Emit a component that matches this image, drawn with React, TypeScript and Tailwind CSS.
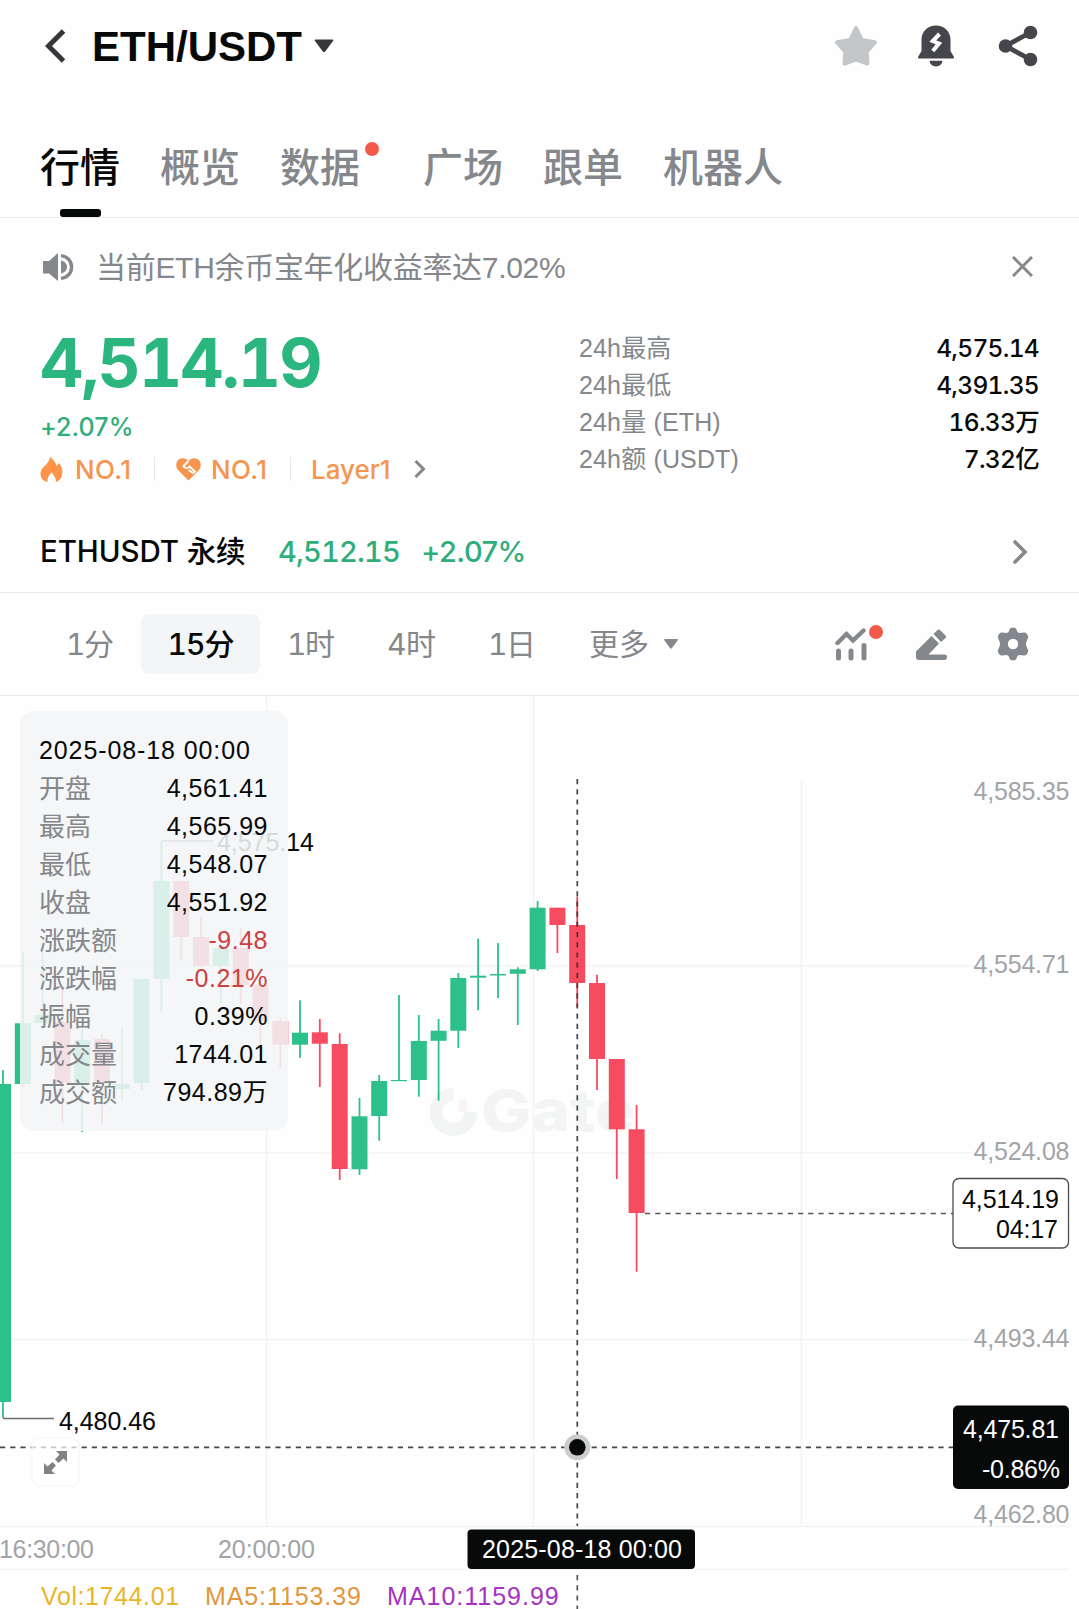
const candles = [
  { x: 3, top: 1084, bottom: 1402, high: 1070, low: 1418, up: true },
  { x: 22.8, top: 1023.3, bottom: 1084, high: 952, low: 1087, up: true },
  { x: 42.6, top: 1015, bottom: 1023, high: 952, low: 1023, up: true },
  { x: 62.4, top: 1022, bottom: 1083, high: 988, low: 1123, up: false },
  { x: 82.2, top: 1040, bottom: 1083, high: 1022, low: 1132, up: true },
  { x: 102, top: 1039, bottom: 1083, high: 1034, low: 1123, up: false },
  { x: 121.8, top: 1084, bottom: 1089, high: 1028, low: 1100, up: true },
  { x: 141.6, top: 979, bottom: 1083, high: 979, low: 1090, up: true },
  { x: 161.4, top: 881, bottom: 978.7, high: 841, low: 1012, up: true },
  { x: 181.2, top: 881, bottom: 937, high: 881, low: 960, up: false },
  { x: 201, top: 937, bottom: 966, high: 917, low: 967, up: false },
  { x: 220.8, top: 948, bottom: 966, high: 930, low: 1003, up: true },
  { x: 240.7, top: 948, bottom: 985, high: 928, low: 1003, up: false },
  { x: 260.5, top: 985, bottom: 1021, high: 985, low: 1047, up: false },
  { x: 280.3, top: 1021, bottom: 1044.7, high: 1018, low: 1068, up: false },
  { x: 300, top: 1032.7, bottom: 1044.7, high: 1000.3, low: 1058, up: true },
  { x: 319.8, top: 1032.3, bottom: 1043.7, high: 1019, low: 1087, up: false },
  { x: 339.7, top: 1044, bottom: 1169, high: 1033.3, low: 1180, up: false },
  { x: 359.5, top: 1116.3, bottom: 1169.3, high: 1098, low: 1175, up: true },
  { x: 379.2, top: 1081, bottom: 1116, high: 1075, low: 1140.7, up: true },
  { x: 399, top: 1080, bottom: 1081.2, high: 995, low: 1081, up: true },
  { x: 418.8, top: 1041, bottom: 1080, high: 1015, low: 1096.7, up: true },
  { x: 438.6, top: 1030.7, bottom: 1040.8, high: 1019, low: 1100.7, up: true },
  { x: 458.3, top: 978, bottom: 1030.7, high: 973, low: 1048, up: true },
  { x: 478.1, top: 975.7, bottom: 977.7, high: 938.7, low: 1010.3, up: true },
  { x: 498, top: 974, bottom: 975.5, high: 943, low: 998, up: true },
  { x: 517.8, top: 969.3, bottom: 973.8, high: 967.3, low: 1025, up: true },
  { x: 537.6, top: 907.7, bottom: 969.3, high: 901, low: 971, up: true },
  { x: 557.4, top: 907.7, bottom: 925, high: 907.7, low: 953, up: false },
  { x: 577.2, top: 925, bottom: 983, high: 897, low: 1007, up: false },
  { x: 597, top: 983, bottom: 1059, high: 974.7, low: 1090, up: false },
  { x: 616.8, top: 1059, bottom: 1129.3, high: 1059, low: 1179, up: false },
  { x: 636.6, top: 1129.3, bottom: 1213, high: 1105, low: 1271.7, up: false },
];

const priceLabels = [
  { y: 792, label: "4,585.35" },
  { y: 965, label: "4,554.71" },
  { y: 1152, label: "4,524.08" },
  { y: 1339, label: "4,493.44" },
  { y: 1515, label: "4,462.80" },
];

const stats = [
  { label: "24h最高", value: "4,575.14" },
  { label: "24h最低", value: "4,391.35" },
  { label: "24h量 (ETH)", value: "16.33万" },
  { label: "24h额 (USDT)", value: "7.32亿" },
];

const details = [
  { label: "开盘", value: "4,561.41" },
  { label: "最高", value: "4,565.99" },
  { label: "最低", value: "4,548.07" },
  { label: "收盘", value: "4,551.92" },
  { label: "涨跌额", value: "-9.48", down: true },
  { label: "涨跌幅", value: "-0.21%", down: true },
  { label: "振幅", value: "0.39%" },
  { label: "成交量", value: "1744.01" },
  { label: "成交额", value: "794.89万" },
];

const tabs = ["行情", "概览", "数据", "广场", "跟单", "机器人"];

// regular weight text uses the wider grotesque, medium weight stays on Inter
const sans = "font-['Liberation_Sans','Noto_Sans_CJK_SC',sans-serif]";

function Header() {
  return (
    <header className="flex h-[92px] items-center pl-[45px] pr-[41px]">
      <svg width="21" height="34" viewBox="0 0 21 34" fill="none" stroke="#36373b" strokeWidth="5">
        <path d="M18.5 2 L3.5 17 L18.5 32" />
      </svg>
      <h1 className={`ml-[26px] mt-[2px] text-[42px] font-bold leading-none text-[#070808] ${sans}`}>ETH/USDT</h1>
      <svg className="ml-[12px]" width="20" height="14" viewBox="0 0 20 14" fill="#36373b">
        <path d="M1.5 0.5H18.5Q20 0.5 19 2L11.2 12.5Q10 14 8.8 12.5L1 2Q0 0.5 1.5 0.5Z" />
      </svg>
      <div className="ml-auto flex items-center">
        <svg width="44" height="42" viewBox="0 0 44 42" fill="#c4c7c9" stroke="#c4c7c9" strokeWidth="4" strokeLinejoin="round">
          <path d="M22 3L27.800 15L41 17.300L32.800 26.500L33.400 38.700L22 34.500L10.600 38.700L11.200 26.500L3 17.300L16.200 15Z" />
        </svg>
        <svg className="ml-[39px]" width="38" height="42" viewBox="0 0 38 42">
          <path
            d="M19 0.5C27 0.5 33.5 6.5 33.5 14.5V26L37 32Q37.4 33.4 36 33.4H2Q0.6 33.4 1 32L4.5 26V14.5C4.5 6.5 11 0.5 19 0.5Z"
            fill="#44464c"
          />
          <path d="M12.5 35.8H25.5C25 39.4 22.4 41.5 19 41.5C15.6 41.5 13 39.4 12.5 35.8Z" fill="#44464c" />
          <path d="M22.5 9L15.8 16L22 18.600L15.8 26" fill="none" stroke="#fff" strokeWidth="4" />
        </svg>
        <svg className="ml-[43px]" width="40" height="42" viewBox="0 0 40 42" fill="#44464c">
          <path d="M32.5 7.5L7.5 21L32.5 34.5" fill="none" stroke="#44464c" strokeWidth="4.8" />
          <circle cx="32.5" cy="7.5" r="6.8" />
          <circle cx="7.5" cy="21" r="6.8" />
          <circle cx="32.5" cy="34.5" r="6.8" />
        </svg>
      </div>
    </header>
  );
}

function Tabs() {
  return (
    <nav className="flex h-[126px] items-end gap-10 border-b border-[#ebecee] pl-[40px]">
      {tabs.map((tab) => (
        <div
          key={tab}
          className={`relative flex h-[76px] flex-col items-center text-[40px] font-medium leading-[54px] ${
            tab === "行情" ? "text-[#070808]" : "text-[#84878b]"
          } ${tab === "数据" ? "mr-[23px]" : ""}`}
        >
          {tab}
          {tab === "行情" && <span className="mt-auto h-2 w-[41px] rounded-[3px] bg-[#070808]" />}
          {tab === "数据" && <span className="absolute -right-[19px] top-[1px] h-[14px] w-[14px] rounded-full bg-[#f2594b]" />}
        </div>
      ))}
    </nav>
  );
}

function Notice() {
  return (
    <div className={`flex h-[98px] items-center pl-[43px] pr-[46px] text-[#84878b] ${sans}`}>
      <svg width="31" height="28" viewBox="0 0 31 28" fill="#84878b">
        <path d="M0 8H6L15 0V28L6 20.500H0Z" />
        <path d="M18 7.500C22 8.500 24 11 24 14C24 17 22 19.500 18 20.500Z" />
        <path d="M18 2.600C24.500 3.200 28.600 8 28.600 14C28.600 20 24.500 24.800 18 25.400" fill="none" stroke="#84878b" strokeWidth="3.400" />
      </svg>
      <p className="ml-[22px] mt-[2px] text-[30px] leading-none tracking-[-0.300px]">当前ETH余币宝年化收益率达7.02%</p>
      <svg className="mb-[2px] ml-auto" width="21" height="21" viewBox="0 0 21 21" stroke="#84878b" strokeWidth="3">
        <path d="M1 1L20 20M20 1L1 20" />
      </svg>
    </div>
  );
}

function Summary() {
  return (
    <section className="flex h-[195px] justify-between pl-[40px] pr-[40px] pt-[14px]">
      <div>
        <div className="text-[67px] font-bold leading-[66px] tracking-[-1.900px] text-[#2bb67f] tabular-nums">4,514.19</div>
        <div className="mt-[14px] text-[25px] font-medium leading-[34px] tracking-[0.1px] text-[#2fae7c]">+2.07%</div>
        <div className="mt-[8px] flex h-[34px] items-center text-[26px] font-medium text-[#f5954e]">
          <svg width="23" height="25" viewBox="0 0 23 25" fill="#ff9348">
            <path d="M10 0C14 3 16 6 16.500 9L19 6C22 10 23 14 22 18C21 22 19 24 16 25C16 21 14 18 11.500 15.500C9 18 7 21 7.500 25C3 24 0.500 21 0.500 16.500C0.500 10 9 8 10 0Z" />
          </svg>
          <span className="ml-[12px] w-[57px] tracking-[0.4px]">NO.1</span>
          <span className="ml-[22px] h-[24px] w-px bg-[#e6e8ea]" />
          <svg className="ml-[21px]" width="25" height="23" viewBox="0 0 25 23">
            <path d="M12.500 22.500L2 12C-1 8 0 3 3.500 1C7 -0.600 10.500 0.500 12.500 3C14.500 0.500 18 -0.600 21.500 1C25 3 26 8 23 12Z" fill="#f5954e" />
            <path d="M12.500 3L7.500 8C8.500 11 12 10.500 13.500 8.500L19 13.500Q17.500 15.500 15.500 14L12.500 12" fill="none" stroke="#fff" strokeWidth="1.900" />
          </svg>
          <span className="ml-[10px] w-[57px] tracking-[0.4px]">NO.1</span>
          <span className="ml-[22px] h-[24px] w-px bg-[#e6e8ea]" />
          <span className="ml-[20px] w-[82px]">Layer1</span>
          <svg className="ml-[21px]" width="12" height="18" viewBox="0 0 12 18" fill="none" stroke="#84878b" strokeWidth="3">
            <path d="M1.500 1L9.500 9L1.500 17" />
          </svg>
        </div>
      </div>
      <div className="w-[460px]">
        {stats.map((s) => (
          <div key={s.label} className="flex h-[37px] items-center justify-between text-[25px]">
            <span className={`tracking-[0.150px] text-[#84878b] ${sans}`}>{s.label}</span>
            <span className="text-[24.500px] font-medium tracking-[-0.700px] text-[#070808] tabular-nums">{s.value}</span>
          </div>
        ))}
      </div>
    </section>
  );
}

function Perpetual() {
  return (
    <div className="flex h-[82px] items-center border-b border-[#ebecee] pl-[40px] pr-[51px] text-[29px] font-medium">
      <span className="w-[206px] text-[29.500px] tracking-[-0.100px] text-[#070808]">ETHUSDT 永续</span>
      <span className="ml-[32px] w-[122px] tracking-[-0.800px] text-[#2fae7c] tabular-nums">4,512.15</span>
      <span className="ml-[21px] tracking-[-0.500px] text-[#2fae7c]">+2.07%</span>
      <svg className="ml-auto" width="15" height="24" viewBox="0 0 15 24" fill="none" stroke="#84878b" strokeWidth="3.600" strokeLinecap="round">
        <path d="M2 2L12 12L2 22" />
      </svg>
    </div>
  );
}

function Intervals() {
  return (
    <div className="flex h-[103px] items-center border-b border-[#ebecee] pl-[41px] pr-[50px] text-[30px] text-[#84878b] tabular-nums">
      <span className="w-[100px] pl-[25px] tracking-[-1.500px]">1分</span>
      <span className="flex h-[60px] w-[119px] items-center justify-center rounded-lg bg-[#f3f5f7] font-medium tracking-[-1px] text-[#070808]">15分</span>
      <span className="w-[100px] pl-[27px] tracking-[-1.500px]">1时</span>
      <span className="w-[101px] pl-[27px] tracking-[-0.500px]">4时</span>
      <span className="w-[100px] pl-[27px] tracking-[-1.500px]">1日</span>
      <span className="pl-[28px]">更多</span>
      <svg className="ml-[15px]" width="14" height="10" viewBox="0 0 14 10" fill="#84878b">
        <path d="M1 0H13Q14.500 0 13.500 1.500L8 9Q7 10.400 6 9L0.500 1.500Q-0.500 0 1 0Z" />
      </svg>
      <div className="ml-auto flex items-center">
        <div className="relative">
          <svg width="32" height="33" viewBox="0 0 32 33" fill="none" stroke="#84878b" strokeLinecap="round" strokeLinejoin="round">
            <path d="M2.500 15L11.500 6L18 12.500L28.500 2.500" strokeWidth="4.400" strokeLinejoin="miter" />
            <path d="M3.500 23V30M16 23V30M29 17.500V30" strokeWidth="5" />
          </svg>
          <span className="absolute -right-[16px] -top-[3px] h-[14px] w-[14px] rounded-full bg-[#f2594b]" />
        </div>
        <svg className="ml-[49px]" width="31" height="31" viewBox="0 0 31 31" fill="#84878b">
          <path d="M15.500 7L23 14.500L12.500 25.500H29Q31 25.500 31 28T29 31H3Q0 31 0 28V22.500Z" />
          <path d="M17.500 5L21.500 1Q22.700 -0.200 24 1L29.500 6.500Q30.700 8 29.500 9L25 13Z" />
        </svg>
        <svg className="ml-[50px]" width="32" height="34" viewBox="0 0 32 34">
          <path
            d="M13 1.500Q16 -0.500 19 1.500L20.500 5Q22 6.300 24 5.800L28 5.500Q31 7 31.200 10.500L29.500 14.500Q28.500 17 29.500 19.500L31.200 23.500Q31 27 28 28.500L24 28.200Q22 27.700 20.500 29L19 32.500Q16 34.500 13 32.500L11.500 29Q10 27.700 8 28.200L4 28.500Q1 27 0.800 23.500L2.500 19.500Q3.500 17 2.500 14.500L0.800 10.500Q1 7 4 5.500L8 5.800Q10 6.300 11.500 5Z"
            fill="#84878b"
          />
          <circle cx="16" cy="17" r="5.200" fill="#fff" />
        </svg>
      </div>
    </div>
  );
}

function Chart() {
  return (
    <div className={`relative h-[874px] ${sans}`}>
      <svg className="block" width="1079" height="874" viewBox="0 696 1079 874" fontSize="25">
        {/* grid */}
        <g stroke="#f3f4f5" strokeWidth="1.500">
          <path d="M266.500 696V1526M533.500 696V1526M801.500 780V1526" />
          <path d="M0 966H974M0 1153H974M0 1339.500H974M0 1526.500H1069M0 1569.500H1069" />
        </g>

        {/* watermark */}
        <path d="M453.500 1094.500A17.500 17.500 0 1 0 471 1112" fill="none" stroke="#f3f5f5" strokeWidth="13" />
        <path d="M459 1100H467V1112H459Z" fill="#faf3f4" />
        <text
          className="font-['Inter',sans-serif]"
          x="481"
          y="1131"
          fontSize="57"
          fontWeight="800"
          fill="#f3f5f5"
          textLength="154"
          lengthAdjust="spacingAndGlyphs"
        >
          Gate
        </text>

        {candles.map((c) => (
          <g key={c.x} fill={c.up ? "#2dc08a" : "#f74b60"}>
            <rect x={c.x - 0.9} y={c.high} width="1.800" height={c.low - c.high} />
            <rect x={c.x - 8} y={c.top} width="16" height={c.bottom - c.top} />
          </g>
        ))}

        {/* high and low of the visible range */}
        <path d="M161.500 841H213M3 1418.500H54" fill="none" stroke="#6b6d70" strokeWidth="1.500" />
        <g fill="#070808">
          <text x="217" y="850.500" textLength="97">4,575.14</text>
          <text x="59" y="1430" textLength="97">4,480.46</text>
        </g>

        <g fill="#a2a4a7" textAnchor="end">
          {priceLabels.map((p) => (
            <text key={p.label} x="1069.500" y={p.y + 8} textLength="96">
              {p.label}
            </text>
          ))}
        </g>
        <g fill="#a2a4a7">
          <text x="-1" y="1558" textLength="95">16:30:00</text>
          <text x="218" y="1558" textLength="97">20:00:00</text>
        </g>

        {/* current price */}
        <path d="M645 1213.500H953" stroke="#55575a" strokeWidth="1.600" strokeDasharray="5.200 5" />
        <rect x="953" y="1178.500" width="115.500" height="69.500" rx="6" fill="#fff" stroke="#4a4c4f" strokeWidth="1.300" />
        <g fill="#070808" textAnchor="end">
          <text x="1059" y="1208" textLength="97">4,514.19</text>
          <text x="1058" y="1238" textLength="62">04:17</text>
        </g>

        {/* crosshair */}
        <g stroke="#333" strokeOpacity="0.900" strokeWidth="1.700" strokeDasharray="5.200 5">
          <path d="M577.300 779V1526" />
          <path d="M0 1447.300H953" />
        </g>
        <circle cx="577.300" cy="1447.300" r="13" fill="#cbcdcc" />
        <circle cx="577.300" cy="1447.300" r="8.300" fill="#070808" />
        <rect x="953" y="1405.500" width="116" height="83.500" rx="5" fill="#070a09" />
        <rect x="467.500" y="1529.500" width="227.500" height="39.500" rx="4" fill="#070a09" />
        <g fill="#fff">
          <text x="1059" y="1438" textAnchor="end" textLength="96">4,475.81</text>
          <text x="1060" y="1478" textAnchor="end" textLength="78">-0.86%</text>
          <text x="482" y="1558" textLength="200">2025-08-18 00:00</text>
        </g>

        {/* expand */}
        <rect x="32" y="1438" width="47" height="48" rx="8" fill="#fff" fillOpacity="0.700" stroke="#f6f7f7" strokeWidth="1.500" />
        <g fill="#808284" stroke="none">
          <path d="M56 1451H67V1462L63.500 1458.500L58.500 1463L55 1459.500L59.500 1454.500Z" />
          <path d="M44 1463L47.500 1466.500L52.500 1462L56 1465.500L51.500 1470.500L55 1474H44Z" />
        </g>
      </svg>

      {/* candle details */}
      <div className="absolute left-[20px] top-[15px] h-[420px] w-[268px] rounded-[14px] bg-[#f2f5f6]/88 pl-[19px] pr-[20px] pt-[21px] text-[25px]">
        <div className="flex h-[38px] items-center whitespace-nowrap tracking-[0.900px] text-[#070808]">2025-08-18 00:00</div>
        {details.map((d) => (
          <div key={d.label} className="flex h-[38px] items-center justify-between">
            <span className="text-[26px] text-[#84878b]">{d.label}</span>
            <span className={`tracking-[0.500px] ${d.down ? "text-[#cc4040]" : "text-[#070808]"}`}>{d.value}</span>
          </div>
        ))}
      </div>
    </div>
  );
}

function Indicators() {
  return (
    <div className={`relative flex h-[39px] items-start gap-[27px] pl-[41px] pt-[13px] text-[25px] leading-[26px] ${sans}`}>
      <span className="w-[137px] tracking-[0.600px] text-[#eab52a]">Vol:1744.01</span>
      <span className="w-[155px] tracking-[0.900px] text-[#e2973c]">MA5:1153.39</span>
      <span className="tracking-[1px] text-[#a433c0]">MA10:1159.99</span>
      <svg className="absolute left-[576px] top-[5px]" width="3" height="34" stroke="#555" strokeWidth="1.700" strokeDasharray="5.200 5">
        <path d="M1.300 0V34" />
      </svg>
    </div>
  );
}

export default function App() {
  return (
    <main className="h-[1609px] w-[1079px] overflow-hidden bg-[#fefefe] font-['Inter','Noto_Sans_CJK_SC',sans-serif]">
      <Header />
      <Tabs />
      <Notice />
      <Summary />
      <Perpetual />
      <Intervals />
      <Chart />
      <Indicators />
    </main>
  );
}
